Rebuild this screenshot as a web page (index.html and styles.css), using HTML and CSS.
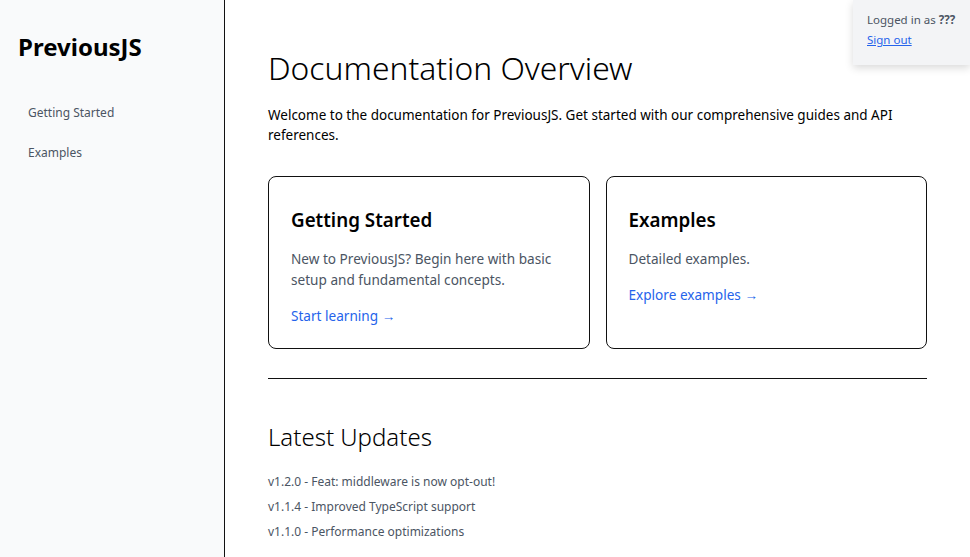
FILE: index.html
```html
<!DOCTYPE html>
<html>
<head>
<meta charset="utf-8">
<link rel="stylesheet" href="styles.css">
</head>
<body>
<div class="layout">
  <aside class="sidebar">
    <div class="brand">PreviousJS</div>
    <nav class="nav">
      <a class="nav-link">Getting Started</a>
      <a class="nav-link">Examples</a>
    </nav>
  </aside>
  <main class="main">
    <h1 class="title">Documentation Overview</h1>
    <p class="intro">Welcome to the documentation for PreviousJS. Get started with our comprehensive guides and API references.</p>
    <div class="cards">
      <div class="card">
        <h2 class="card-title">Getting Started</h2>
        <p class="card-text">New to PreviousJS? Begin here with basic setup and fundamental concepts.</p>
        <a class="card-link">Start learning →</a>
      </div>
      <div class="card">
        <h2 class="card-title">Examples</h2>
        <p class="card-text">Detailed examples.</p>
        <a class="card-link">Explore examples →</a>
      </div>
    </div>
    <hr class="divider">
    <h2 class="updates-title">Latest Updates</h2>
    <ul class="updates">
      <li>v1.2.0 - Feat: middleware is now opt-out!</li>
      <li>v1.1.4 - Improved TypeScript support</li>
      <li>v1.1.0 - Performance optimizations</li>
    </ul>
  </main>
</div>
<div class="user-box">
  <div class="user-line">Logged in as <b>???</b></div>
  <a class="signout">Sign out</a>
</div>
</body>
</html>
```
FILE: styles.css
```css
* { box-sizing: border-box; }
html, body { margin: 0; padding: 0; }
body {
  font-family: "Noto Sans", sans-serif;
  color: #000;
  background: #fff;
  width: 970px;
  height: 557px;
  overflow: hidden;
}
.layout {
  display: flex;
  height: 557px;
}
.sidebar {
  width: 225px;
  flex: none;
  background: #f9fafb;
  border-right: 1px solid #111;
  padding: 30px 18px;
}
.brand {
  font-size: 24px;
  font-weight: 700;
  line-height: 34px;
  margin-bottom: 39px;
}
.nav {
  display: flex;
  flex-direction: column;
  gap: 20px;
  padding-left: 10px;
}
.nav-link {
  font-size: 12px;
  color: #4b5563;
  line-height: 20px;
}
.main {
  flex: 1;
  padding: 46px 43px 0 43px;
}
.title {
  font-size: 31.8px;
  font-weight: 300;
  margin: 0;
  line-height: 44px;
}
.intro {
  font-size: 13.5px;
  line-height: 20px;
  margin: 15px 0 31px;
}
.cards {
  display: grid;
  grid-template-columns: 1fr 1fr;
  gap: 16px;
}
.card {
  border: 1px solid #111;
  border-radius: 8px;
  padding: 29px 22px 20px;
  height: 173px;
}
.card-title {
  font-size: 18.8px;
  font-weight: 600;
  margin: 0;
  line-height: 28px;
}
.card-text {
  color: #4b5563;
  font-size: 13.6px;
  line-height: 21px;
  margin: 14px 0 16px;
}
.card-link {
  display: block;
  color: #2563eb;
  font-size: 13.6px;
  line-height: 20px;
}
.divider {
  border: 0;
  border-top: 1px solid #111;
  margin: 29px 0 0;
}
.updates-title {
  font-size: 24px;
  font-weight: 300;
  margin: 41px 0 0;
  line-height: 34px;
}
.updates {
  list-style: none;
  margin: 15px 0 0;
  padding: 0;
}
.updates li {
  font-size: 12px;
  color: #4b5563;
  line-height: 25px;
}
.user-box {
  position: absolute;
  top: 0;
  right: 0;
  width: 117px;
  height: 65px;
  background: #f3f4f6;
  box-shadow: 0 3px 8px rgba(0,0,0,0.15);
  padding: 10px 14px;
  font-size: 11.5px;
  line-height: 20px;
  color: #4b5563;
  white-space: nowrap;
}
.user-line b { font-weight: 700; }
.signout {
  color: #2563eb;
  text-decoration: underline;
}
```
